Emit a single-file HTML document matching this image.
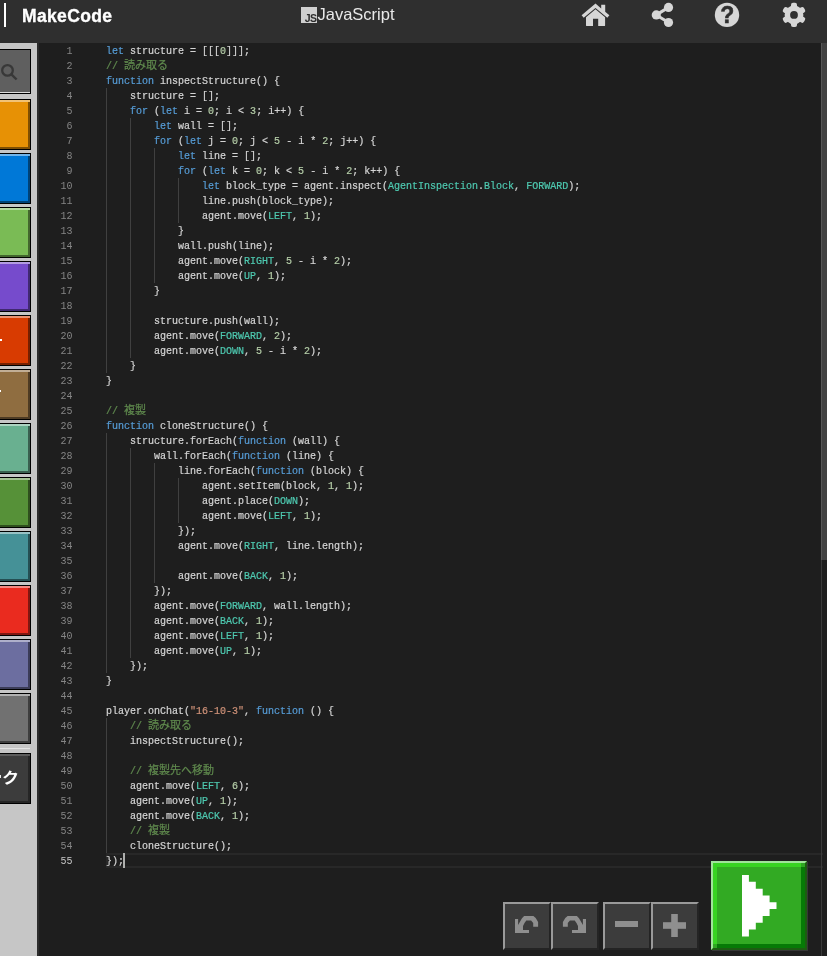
<!DOCTYPE html>
<html lang="ja"><head><meta charset="utf-8"><title>MakeCode</title>
<style>
html,body{margin:0;padding:0;}
body{width:827px;height:956px;overflow:hidden;background:#1e1e1e;position:relative;font-family:"Liberation Sans","Noto Sans CJK JP",sans-serif;}
#hdr{position:absolute;left:0;top:0;width:827px;height:43px;background:#2f2f2f;}
#bar{position:absolute;left:3.8px;top:3px;width:2.5px;height:24px;background:#fff;}
#logo{position:absolute;left:22px;top:5px;font-weight:bold;font-size:17.5px;line-height:22px;color:#fff;letter-spacing:0.35px;-webkit-text-stroke:0.35px #fff;}
#jsico{position:absolute;left:301px;top:7px;width:16px;height:16px;background:#d0d0d0;}
#jsico span{position:absolute;right:0.5px;bottom:1px;font-size:10.5px;line-height:8px;font-weight:bold;color:#2d2d2d;letter-spacing:-0.5px;}
#jst{position:absolute;left:317.5px;top:4px;font-size:16.5px;line-height:20px;color:#e8e8e8;}
#side{position:absolute;left:0;top:43px;width:37px;height:913px;background:#c6c6c6;}
#strip{position:absolute;left:37px;top:43px;width:2px;height:913px;background:#2c2c2c;}
.cat{position:absolute;left:-1px;width:30px;height:49px;border:1px solid #000;}
#search{position:absolute;left:-1px;top:49px;width:30px;height:43px;border:1px solid #000;background:#5f5f5f;box-shadow:inset 0 -1px 0 #ddd;}
#sep{position:absolute;left:0;top:748px;width:30px;height:1px;background:#e4e4e4;}
#adv{position:absolute;left:-1px;top:753px;width:30px;height:49px;border:1px solid #000;background:#3c3c3c;box-shadow:inset 0 2px 0 #5c5c5c, inset -2px -2px 0 #262626;overflow:hidden;}
#adv span{position:absolute;right:11px;top:14px;white-space:nowrap;color:#fff;transform:scaleX(1.14);transform-origin:100% 50%;font-size:15px;font-weight:bold;line-height:20px;}
.cl,.ln{position:absolute;height:15px;line-height:15px;font-family:"Liberation Mono","Noto Sans CJK JP",monospace;font-size:10px;white-space:pre;}
.cl{left:106px;color:#d4d4d4;-webkit-text-stroke:0.2px;}
.ln{left:38.5px;width:34px;text-align:right;color:#858585;}
.ln.cur{color:#c6c6c6;}
.k{color:#569cd6;} .t{color:#4ec9b0;} .n{color:#b5cea8;} .s{color:#ce9178;} .c{color:#608b4e;}
.j{font-size:11px;}
.g{position:absolute;width:1px;height:15px;background:#404040;}
#curline{position:absolute;left:106px;top:853px;width:715px;height:11px;border:2px solid #282828;border-right:0;}
#cursor{position:absolute;left:123px;top:853px;width:2px;height:15px;background:#aeafad;}
#ruler{position:absolute;left:821px;top:43px;width:1px;height:913px;background:#3a3a3a;}
#thumb{position:absolute;left:821px;top:43px;width:6px;height:517px;background:#424242;border-left:1px solid #565656;box-sizing:border-box;}
.tb{position:absolute;top:902px;width:44px;height:44px;background:#3c3c3c;border-style:solid;border-width:2px;border-color:#9a9a9a #242424 #242424 #9a9a9a;}
#run{position:absolute;left:711px;top:861px;width:92px;height:85px;border-style:solid;border-width:2px;border-color:#a0e49a #1d5c12 #1d5c12 #a0e49a;box-shadow:1px 1px 0 #363636;}
#run i{position:absolute;left:0;top:0;width:84px;height:77px;background:#32aa23;border-style:solid;border-width:4px;border-color:#38d422 #067a06 #067a06 #38d422;}
#run b{position:absolute;width:4px;height:4px;background:#2fa722;}
svg{position:absolute;overflow:visible;}
.gs2{will-change:transform;}
.gs{position:absolute;left:0;top:0;width:827px;height:956px;will-change:transform;pointer-events:none;}
</style></head><body>
<div id="hdr">
<div id="bar"></div>
<div class="gs"><div id="logo">MakeCode</div>
<div id="jsico"><span>JS</span></div>
<div id="jst">JavaScript</div></div>
<svg id="icons" width="827" height="43" viewBox="0 0 827 43" style="left:0;top:0">
<g fill="#d6d6d6">
<!-- home -->
<path d="M595.5 3.6 L601.2 8.4 V4.8 H605.2 V11.8 L609.4 15.3 L607.3 17.7 L595.5 7.9 L583.7 17.7 L581.6 15.3 Z"/>
<path d="M595.5 9.2 L605.1 17.2 V25.2 Q605.1 26.1 604.2 26.1 H598.2 V18.7 H593 V26.1 H586.9 Q586 26.1 586 25.2 V17.2 Z"/>
<!-- share -->
<circle cx="668.5" cy="7.4" r="4.6"/><circle cx="668.5" cy="22.5" r="4.6"/><circle cx="656.3" cy="14.9" r="4.6"/>
<path d="M656.3 14.9 L668.5 7.4 M656.3 14.9 L668.5 22.5" stroke="#d6d6d6" stroke-width="3" fill="none"/>
<!-- help -->
<circle cx="727" cy="14.9" r="12.2"/>
<!-- gear -->
<g transform="translate(794 14.9)"><circle r="9.4"/><rect x="-3" y="-12.1" width="6" height="24.2" rx="2" ry="2" transform="rotate(0)"/><rect x="-3" y="-12.1" width="6" height="24.2" rx="2" ry="2" transform="rotate(60)"/><rect x="-3" y="-12.1" width="6" height="24.2" rx="2" ry="2" transform="rotate(120)"/><circle r="3.9" fill="#2f2f2f"/></g>
</g>
<text x="727.3" y="22.8" text-anchor="middle" style="font-family:'Liberation Sans',sans-serif;font-weight:bold;font-size:23px" fill="#2f2f2f" stroke="#2f2f2f" stroke-width="0.5">?</text>
</svg>
</div>
<div id="side">
</div>
<div id="sidecats" style="position:absolute;left:0;top:0;width:37px;height:956px;overflow:hidden">
<div id="search"><svg width="30" height="43" viewBox="0 0 30 43" style="left:0;top:0"><circle cx="7.5" cy="20.4" r="5.3" fill="none" stroke="#383838" stroke-width="2.3"/><path d="M11.4 24.3 L16.6 29.5" stroke="#383838" stroke-width="2.4" stroke-linecap="butt"/></svg></div>
<div class="cat" style="top:99px;background:#e79105;box-shadow:inset 0 2px 0 #f1c275, inset -2px -2px 0 #7f4f02"></div>
<div class="cat" style="top:153px;background:#0078d7;box-shadow:inset 0 2px 0 #72b4e9, inset -2px -2px 0 #004276"></div>
<div class="cat" style="top:207px;background:#7abb55;box-shadow:inset 0 2px 0 #b5d9a1, inset -2px -2px 0 #43662e"></div>
<div class="cat" style="top:261px;background:#764bcc;box-shadow:inset 0 2px 0 #b39ce2, inset -2px -2px 0 #402970"></div>
<div class="cat" style="top:315px;background:#d83b01;box-shadow:inset 0 2px 0 #e99373, inset -2px -2px 0 #762000"></div>
<div class="cat" style="top:369px;background:#8f6d40;box-shadow:inset 0 2px 0 #c1ae95, inset -2px -2px 0 #4e3b23"></div>
<div class="cat" style="top:423px;background:#69b090;box-shadow:inset 0 2px 0 #acd3c1, inset -2px -2px 0 #39604f"></div>
<div class="cat" style="top:477px;background:#569138;box-shadow:inset 0 2px 0 #a2c291, inset -2px -2px 0 #2f4f1e"></div>
<div class="cat" style="top:531px;background:#459197;box-shadow:inset 0 2px 0 #98c2c5, inset -2px -2px 0 #254f53"></div>
<div class="cat" style="top:585px;background:#ea2b1f;box-shadow:inset 0 2px 0 #f38a83, inset -2px -2px 0 #801711"></div>
<div class="cat" style="top:639px;background:#6c6ea0;box-shadow:inset 0 2px 0 #aeafca, inset -2px -2px 0 #3b3c58"></div>
<div class="cat" style="top:693px;background:#717171;box-shadow:inset 0 2px 0 #b0b0b0, inset -2px -2px 0 #3e3e3e"></div>
<div style="position:absolute;left:0;top:339px;width:2px;height:2px;background:#fff"></div>
<div style="position:absolute;left:0;top:390px;width:1px;height:2px;background:#fff"></div>
<div id="sep"></div>
<div style="position:absolute;left:0;top:775px;width:1px;height:3px;background:#e8e8e8;z-index:3"></div>
<div id="adv"><span class="gs2">高度なブロック</span></div>
</div>
<div id="strip"></div>
<div id="curline"></div>
<div class="gs">
<i class="g" style="left:106px;top:88px"></i>
<i class="g" style="left:106px;top:103px"></i>
<i class="g" style="left:106px;top:118px"></i>
<i class="g" style="left:130px;top:118px"></i>
<i class="g" style="left:106px;top:133px"></i>
<i class="g" style="left:130px;top:133px"></i>
<i class="g" style="left:106px;top:148px"></i>
<i class="g" style="left:130px;top:148px"></i>
<i class="g" style="left:154px;top:148px"></i>
<i class="g" style="left:106px;top:163px"></i>
<i class="g" style="left:130px;top:163px"></i>
<i class="g" style="left:154px;top:163px"></i>
<i class="g" style="left:106px;top:178px"></i>
<i class="g" style="left:130px;top:178px"></i>
<i class="g" style="left:154px;top:178px"></i>
<i class="g" style="left:178px;top:178px"></i>
<i class="g" style="left:106px;top:193px"></i>
<i class="g" style="left:130px;top:193px"></i>
<i class="g" style="left:154px;top:193px"></i>
<i class="g" style="left:178px;top:193px"></i>
<i class="g" style="left:106px;top:208px"></i>
<i class="g" style="left:130px;top:208px"></i>
<i class="g" style="left:154px;top:208px"></i>
<i class="g" style="left:178px;top:208px"></i>
<i class="g" style="left:106px;top:223px"></i>
<i class="g" style="left:130px;top:223px"></i>
<i class="g" style="left:154px;top:223px"></i>
<i class="g" style="left:106px;top:238px"></i>
<i class="g" style="left:130px;top:238px"></i>
<i class="g" style="left:154px;top:238px"></i>
<i class="g" style="left:106px;top:253px"></i>
<i class="g" style="left:130px;top:253px"></i>
<i class="g" style="left:154px;top:253px"></i>
<i class="g" style="left:106px;top:268px"></i>
<i class="g" style="left:130px;top:268px"></i>
<i class="g" style="left:154px;top:268px"></i>
<i class="g" style="left:106px;top:283px"></i>
<i class="g" style="left:130px;top:283px"></i>
<i class="g" style="left:106px;top:298px"></i>
<i class="g" style="left:130px;top:298px"></i>
<i class="g" style="left:106px;top:313px"></i>
<i class="g" style="left:130px;top:313px"></i>
<i class="g" style="left:106px;top:328px"></i>
<i class="g" style="left:130px;top:328px"></i>
<i class="g" style="left:106px;top:343px"></i>
<i class="g" style="left:130px;top:343px"></i>
<i class="g" style="left:106px;top:358px"></i>
<i class="g" style="left:106px;top:433px"></i>
<i class="g" style="left:106px;top:448px"></i>
<i class="g" style="left:130px;top:448px"></i>
<i class="g" style="left:106px;top:463px"></i>
<i class="g" style="left:130px;top:463px"></i>
<i class="g" style="left:154px;top:463px"></i>
<i class="g" style="left:106px;top:478px"></i>
<i class="g" style="left:130px;top:478px"></i>
<i class="g" style="left:154px;top:478px"></i>
<i class="g" style="left:178px;top:478px"></i>
<i class="g" style="left:106px;top:493px"></i>
<i class="g" style="left:130px;top:493px"></i>
<i class="g" style="left:154px;top:493px"></i>
<i class="g" style="left:178px;top:493px"></i>
<i class="g" style="left:106px;top:508px"></i>
<i class="g" style="left:130px;top:508px"></i>
<i class="g" style="left:154px;top:508px"></i>
<i class="g" style="left:178px;top:508px"></i>
<i class="g" style="left:106px;top:523px"></i>
<i class="g" style="left:130px;top:523px"></i>
<i class="g" style="left:154px;top:523px"></i>
<i class="g" style="left:106px;top:538px"></i>
<i class="g" style="left:130px;top:538px"></i>
<i class="g" style="left:154px;top:538px"></i>
<i class="g" style="left:106px;top:553px"></i>
<i class="g" style="left:130px;top:553px"></i>
<i class="g" style="left:154px;top:553px"></i>
<i class="g" style="left:106px;top:568px"></i>
<i class="g" style="left:130px;top:568px"></i>
<i class="g" style="left:154px;top:568px"></i>
<i class="g" style="left:106px;top:583px"></i>
<i class="g" style="left:130px;top:583px"></i>
<i class="g" style="left:106px;top:598px"></i>
<i class="g" style="left:130px;top:598px"></i>
<i class="g" style="left:106px;top:613px"></i>
<i class="g" style="left:130px;top:613px"></i>
<i class="g" style="left:106px;top:628px"></i>
<i class="g" style="left:130px;top:628px"></i>
<i class="g" style="left:106px;top:643px"></i>
<i class="g" style="left:130px;top:643px"></i>
<i class="g" style="left:106px;top:658px"></i>
<i class="g" style="left:106px;top:718px"></i>
<i class="g" style="left:106px;top:733px"></i>
<i class="g" style="left:106px;top:748px"></i>
<i class="g" style="left:106px;top:763px"></i>
<i class="g" style="left:106px;top:778px"></i>
<i class="g" style="left:106px;top:793px"></i>
<i class="g" style="left:106px;top:808px"></i>
<i class="g" style="left:106px;top:823px"></i>
<i class="g" style="left:106px;top:838px"></i>
<div class="ln" style="top:44px">1</div><div class="cl" style="top:44px"><span class="k">let</span> structure = [[[<span class="n">0</span>]]];</div>
<div class="ln" style="top:59px">2</div><div class="cl" style="top:59px"><span class="c">// <span class="j">読み取る</span></span></div>
<div class="ln" style="top:74px">3</div><div class="cl" style="top:74px"><span class="k">function</span> inspectStructure() {</div>
<div class="ln" style="top:89px">4</div><div class="cl" style="top:89px">    structure = [];</div>
<div class="ln" style="top:104px">5</div><div class="cl" style="top:104px">    <span class="k">for</span> (<span class="k">let</span> i = <span class="n">0</span>; i &lt; <span class="n">3</span>; i++) {</div>
<div class="ln" style="top:119px">6</div><div class="cl" style="top:119px">        <span class="k">let</span> wall = [];</div>
<div class="ln" style="top:134px">7</div><div class="cl" style="top:134px">        <span class="k">for</span> (<span class="k">let</span> j = <span class="n">0</span>; j &lt; <span class="n">5</span> - i * <span class="n">2</span>; j++) {</div>
<div class="ln" style="top:149px">8</div><div class="cl" style="top:149px">            <span class="k">let</span> line = [];</div>
<div class="ln" style="top:164px">9</div><div class="cl" style="top:164px">            <span class="k">for</span> (<span class="k">let</span> k = <span class="n">0</span>; k &lt; <span class="n">5</span> - i * <span class="n">2</span>; k++) {</div>
<div class="ln" style="top:179px">10</div><div class="cl" style="top:179px">                <span class="k">let</span> block_type = agent.inspect(<span class="t">AgentInspection</span>.<span class="t">Block</span>, <span class="t">FORWARD</span>);</div>
<div class="ln" style="top:194px">11</div><div class="cl" style="top:194px">                line.push(block_type);</div>
<div class="ln" style="top:209px">12</div><div class="cl" style="top:209px">                agent.move(<span class="t">LEFT</span>, <span class="n">1</span>);</div>
<div class="ln" style="top:224px">13</div><div class="cl" style="top:224px">            }</div>
<div class="ln" style="top:239px">14</div><div class="cl" style="top:239px">            wall.push(line);</div>
<div class="ln" style="top:254px">15</div><div class="cl" style="top:254px">            agent.move(<span class="t">RIGHT</span>, <span class="n">5</span> - i * <span class="n">2</span>);</div>
<div class="ln" style="top:269px">16</div><div class="cl" style="top:269px">            agent.move(<span class="t">UP</span>, <span class="n">1</span>);</div>
<div class="ln" style="top:284px">17</div><div class="cl" style="top:284px">        }</div>
<div class="ln" style="top:299px">18</div><div class="cl" style="top:299px"></div>
<div class="ln" style="top:314px">19</div><div class="cl" style="top:314px">        structure.push(wall);</div>
<div class="ln" style="top:329px">20</div><div class="cl" style="top:329px">        agent.move(<span class="t">FORWARD</span>, <span class="n">2</span>);</div>
<div class="ln" style="top:344px">21</div><div class="cl" style="top:344px">        agent.move(<span class="t">DOWN</span>, <span class="n">5</span> - i * <span class="n">2</span>);</div>
<div class="ln" style="top:359px">22</div><div class="cl" style="top:359px">    }</div>
<div class="ln" style="top:374px">23</div><div class="cl" style="top:374px">}</div>
<div class="ln" style="top:389px">24</div><div class="cl" style="top:389px"></div>
<div class="ln" style="top:404px">25</div><div class="cl" style="top:404px"><span class="c">// <span class="j">複製</span></span></div>
<div class="ln" style="top:419px">26</div><div class="cl" style="top:419px"><span class="k">function</span> cloneStructure() {</div>
<div class="ln" style="top:434px">27</div><div class="cl" style="top:434px">    structure.forEach(<span class="k">function</span> (wall) {</div>
<div class="ln" style="top:449px">28</div><div class="cl" style="top:449px">        wall.forEach(<span class="k">function</span> (line) {</div>
<div class="ln" style="top:464px">29</div><div class="cl" style="top:464px">            line.forEach(<span class="k">function</span> (block) {</div>
<div class="ln" style="top:479px">30</div><div class="cl" style="top:479px">                agent.setItem(block, <span class="n">1</span>, <span class="n">1</span>);</div>
<div class="ln" style="top:494px">31</div><div class="cl" style="top:494px">                agent.place(<span class="t">DOWN</span>);</div>
<div class="ln" style="top:509px">32</div><div class="cl" style="top:509px">                agent.move(<span class="t">LEFT</span>, <span class="n">1</span>);</div>
<div class="ln" style="top:524px">33</div><div class="cl" style="top:524px">            });</div>
<div class="ln" style="top:539px">34</div><div class="cl" style="top:539px">            agent.move(<span class="t">RIGHT</span>, line.length);</div>
<div class="ln" style="top:554px">35</div><div class="cl" style="top:554px"></div>
<div class="ln" style="top:569px">36</div><div class="cl" style="top:569px">            agent.move(<span class="t">BACK</span>, <span class="n">1</span>);</div>
<div class="ln" style="top:584px">37</div><div class="cl" style="top:584px">        });</div>
<div class="ln" style="top:599px">38</div><div class="cl" style="top:599px">        agent.move(<span class="t">FORWARD</span>, wall.length);</div>
<div class="ln" style="top:614px">39</div><div class="cl" style="top:614px">        agent.move(<span class="t">BACK</span>, <span class="n">1</span>);</div>
<div class="ln" style="top:629px">40</div><div class="cl" style="top:629px">        agent.move(<span class="t">LEFT</span>, <span class="n">1</span>);</div>
<div class="ln" style="top:644px">41</div><div class="cl" style="top:644px">        agent.move(<span class="t">UP</span>, <span class="n">1</span>);</div>
<div class="ln" style="top:659px">42</div><div class="cl" style="top:659px">    });</div>
<div class="ln" style="top:674px">43</div><div class="cl" style="top:674px">}</div>
<div class="ln" style="top:689px">44</div><div class="cl" style="top:689px"></div>
<div class="ln" style="top:704px">45</div><div class="cl" style="top:704px">player.onChat(<span class="s">&quot;16-10-3&quot;</span>, <span class="k">function</span> () {</div>
<div class="ln" style="top:719px">46</div><div class="cl" style="top:719px">    <span class="c">// <span class="j">読み取る</span></span></div>
<div class="ln" style="top:734px">47</div><div class="cl" style="top:734px">    inspectStructure();</div>
<div class="ln" style="top:749px">48</div><div class="cl" style="top:749px"></div>
<div class="ln" style="top:764px">49</div><div class="cl" style="top:764px">    <span class="c">// <span class="j">複製先へ移動</span></span></div>
<div class="ln" style="top:779px">50</div><div class="cl" style="top:779px">    agent.move(<span class="t">LEFT</span>, <span class="n">6</span>);</div>
<div class="ln" style="top:794px">51</div><div class="cl" style="top:794px">    agent.move(<span class="t">UP</span>, <span class="n">1</span>);</div>
<div class="ln" style="top:809px">52</div><div class="cl" style="top:809px">    agent.move(<span class="t">BACK</span>, <span class="n">1</span>);</div>
<div class="ln" style="top:824px">53</div><div class="cl" style="top:824px">    <span class="c">// <span class="j">複製</span></span></div>
<div class="ln" style="top:839px">54</div><div class="cl" style="top:839px">    cloneStructure();</div>
<div class="ln cur" style="top:854px">55</div><div class="cl" style="top:854px">});</div>
</div>
<div id="cursor"></div>
<div id="ruler"></div>
<div id="thumb"></div>
<div class="tb" style="left:503px"></div>
<div class="tb" style="left:551px"></div>
<div class="tb" style="left:603px"></div>
<div class="tb" style="left:651px"></div>
<svg width="200" height="50" viewBox="500 900 200 50" style="left:500px;top:900px">
<g fill="#8f8f8f">
<!-- undo -->
<path d="M515.0 919.1 L518.1 919.1 L518.1 924.9 L520.1 921.6 L522.0 918.3 L524.1 916.0 L533.4 916.0 L535.7 918.1 L538.1 922.0 L538.1 926.8 L533.2 926.8 L533.2 923.0 L531.1 920.4 L526.3 920.4 L524.5 923.0 L523.0 925.9 L523.0 929.9 L529.0 929.9 L529.0 933.0 L515.0 933.0Z"/>
<!-- redo -->
<path transform="translate(1101 0) scale(-1 1)" d="M515.0 919.1 L518.1 919.1 L518.1 924.9 L520.1 921.6 L522.0 918.3 L524.1 916.0 L533.4 916.0 L535.7 918.1 L538.1 922.0 L538.1 926.8 L533.2 926.8 L533.2 923.0 L531.1 920.4 L526.3 920.4 L524.5 923.0 L523.0 925.9 L523.0 929.9 L529.0 929.9 L529.0 933.0 L515.0 933.0Z"/>
<rect x="615" y="921" width="23" height="6"/>
<rect x="663" y="922.2" width="23" height="6.6"/><rect x="671.2" y="914" width="6.6" height="23"/>
</g></svg>
<div id="run"><i></i><b style="left:88px;top:0"></b><b style="left:0;top:81px"></b></div>
<svg width="40" height="70" viewBox="0 0 5 9" style="left:741.8px;top:874.6px;width:34.5px;height:61.4px" preserveAspectRatio="none">
<path fill="#fff" d="M0 0h1v1h1v1h1v1h1v1h1v1h-1v1h-1v1h-1v1h-1v1h-1z"/></svg>
</body></html>
